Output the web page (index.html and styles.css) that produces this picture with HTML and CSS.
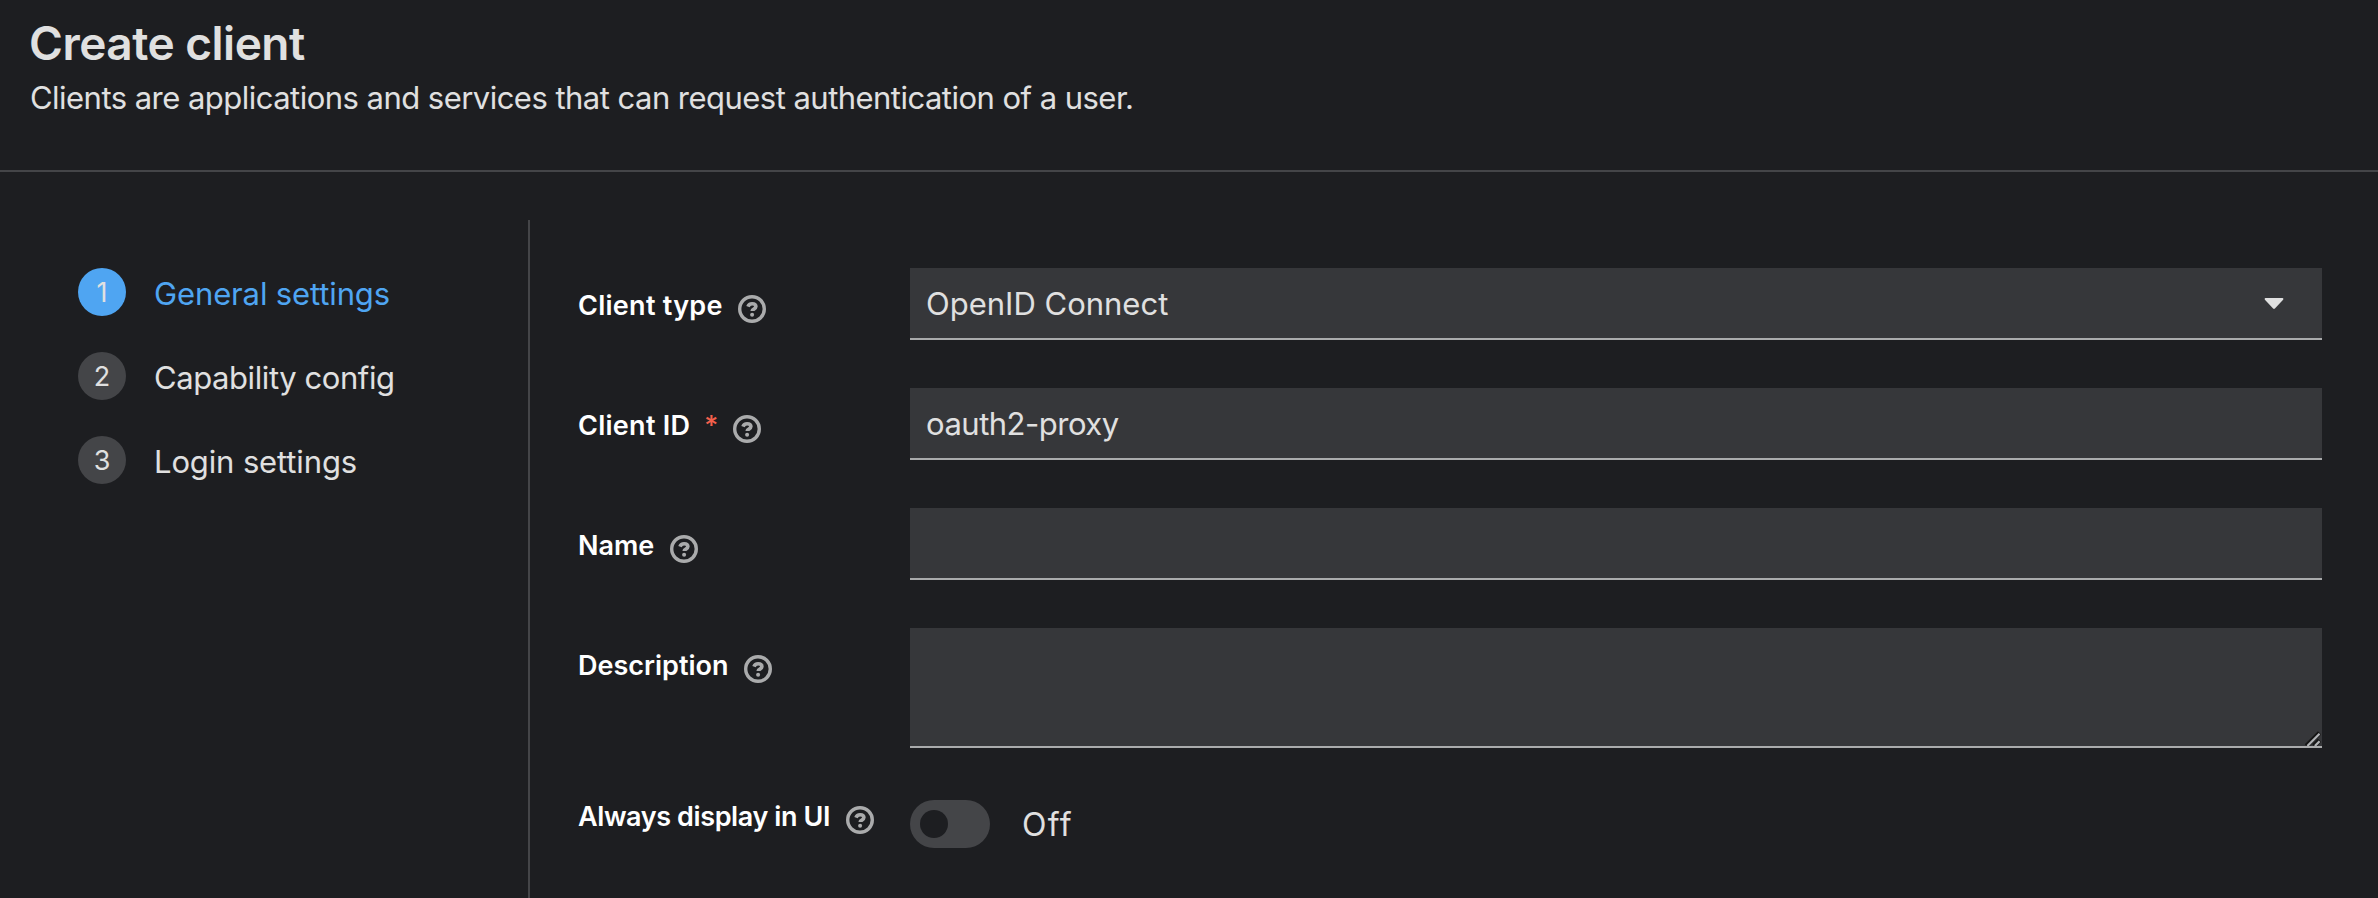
FILE: index.html
```html
<!DOCTYPE html>
<html lang="en">
<head>
<meta charset="utf-8">
<title>Create client</title>
<link rel="stylesheet" href="styles.css">
</head>
<body>
<svg class="sprite" aria-hidden="true">
  <symbol id="help" viewBox="0 0 28 28">
    <circle cx="14" cy="14" r="12.3" fill="none" stroke="currentColor" stroke-width="3.4"/>
    <path d="M10 11.6C10.6 9.7 12.1 8.7 14.1 8.7c2.2 0 3.8 1.1 3.8 2.9 0 2.5-3.7 2.4-3.7 4.4" fill="none" stroke="currentColor" stroke-width="3.6"/>
    <circle cx="14.1" cy="19.7" r="2" fill="currentColor"/>
  </symbol>
</svg>

<header class="page-header">
  <h1 class="title">Create client</h1>
  <p class="subtitle">Clients are applications and services that can request authentication of a user.</p>
</header>

<div class="wizard">
  <nav class="steps">
    <a class="step step-current"><span class="step-number">1</span><span class="step-name">General settings</span></a>
    <a class="step"><span class="step-number">2</span><span class="step-name step-tight">Capability config</span></a>
    <a class="step"><span class="step-number">3</span><span class="step-name">Login settings</span></a>
  </nav>

  <form class="form">
    <div class="row">
      <div class="label"><span class="label-text label-wide">Client type</span><svg class="help"><use href="#help"/></svg></div>
      <div class="control select"><span>OpenID Connect</span><svg class="caret" viewBox="0 0 20 12"><path d="M1.3 0h17.4q1.3 0.7 0.4 1.8L10.9 10.5q-0.9 0.9-1.8 0L0.9 1.8Q0 0.7 1.3 0z" fill="currentColor"/></svg></div>
    </div>
    <div class="row">
      <div class="label"><span class="label-text label-wide">Client ID</span><span class="required">*</span><svg class="help"><use href="#help"/></svg></div>
      <input class="control value-tight" type="text" value="oauth2-proxy">
    </div>
    <div class="row">
      <div class="label"><span class="label-text">Name</span><svg class="help help-spaced"><use href="#help"/></svg></div>
      <input class="control" type="text">
    </div>
    <div class="row">
      <div class="label"><span class="label-text">Description</span><svg class="help help-spaced"><use href="#help"/></svg></div>
      <div class="control textarea"><svg class="grip" viewBox="0 0 16 16"><path d="M1 16L15 2M9 16l6-6" stroke="#151515" stroke-width="5"/><path d="M2 16L15 3M10 16l5-5" stroke="#b0b2b5" stroke-width="2.4"/></svg></div>
    </div>
    <div class="row row-switch">
      <div class="label"><span class="label-text label-tight">Always display in UI</span><svg class="help help-spaced"><use href="#help"/></svg></div>
      <div class="switch"><span class="track"><span class="knob"></span></span><span class="switch-text">Off</span></div>
    </div>
  </form>
</div>
</body>
</html>
```
FILE: styles.css
```css
* { box-sizing: border-box; }

body {
  margin: 0;
  height: 898px;
  overflow: hidden;
  display: flex;
  flex-direction: column;
  background: #1d1e21;
  color: #e0e0e0;
  font-family: Inter, "Open Sans", sans-serif;
  font-size: 31px;
  line-height: 48px;
  white-space: nowrap;
}

.sprite { display: none; }

.page-header {
  height: 172px;
  flex: none;
  padding: 13px 29px 0;
  border-bottom: 2px solid #444548;
}

.title {
  margin: 0;
  font-size: 46px;
  font-weight: 600;
  letter-spacing: -0.5px;
  line-height: 60px;
}

.subtitle {
  margin: 1px 0 0 1px;
  letter-spacing: -0.53px;
}

.wizard {
  flex: 1;
  display: flex;
  padding-top: 48px;
}

.steps {
  width: 530px;
  flex: none;
  display: flex;
  flex-direction: column;
  gap: 36px;
  padding: 48px 0 0 78px;
  border-right: 2px solid #444548;
}

.step {
  display: flex;
  gap: 28px;
  height: 48px;
}

.step-number {
  width: 48px;
  height: 48px;
  padding-top: 1px;
  border-radius: 50%;
  background: #444548;
  font-size: 27px;
  text-align: center;
}

.step-name {
  padding-top: 2px;
  letter-spacing: -0.13px;
}

.step-tight { letter-spacing: -0.42px; }

.step-current { color: #4fa5f2; }

.step-current .step-number {
  background: #4fa5f2;
  color: #e0e0e0;
}

.form {
  flex: 1;
  display: flex;
  flex-direction: column;
  gap: 48px;
  padding: 48px 56px 0 48px;
}

.row {
  display: grid;
  grid-template-columns: 332px 1fr;
}

.label {
  display: flex;
  align-items: flex-start;
  padding-top: 14px;
  color: #fff;
  font-size: 27px;
  font-weight: 600;
}

.label-wide { letter-spacing: 0.28px; }
.label-tight { letter-spacing: -0.4px; }

.required {
  margin-left: 14px;
  color: #f4604c;
  font-size: 27px;
  font-weight: 500;
}

.help {
  width: 28px;
  height: 28px;
  margin: 13px 0 0 15px;
  color: #aaabac;
}

.help-spaced { margin-left: 16px; }

.control {
  width: 100%;
  height: 72px;
  padding: 0 16px;
  border: 0;
  border-bottom: 2px solid #aaabac;
  border-radius: 0;
  outline: 0;
  background: #36373a;
  color: #e0e0e0;
  font: inherit;
}

.value-tight { letter-spacing: -0.5px; }

.select {
  display: flex;
  align-items: center;
  justify-content: space-between;
  padding-top: 2px;
}

.caret {
  width: 20px;
  height: 12px;
  margin-right: 22px;
}

.textarea {
  height: 120px;
  display: flex;
  align-items: flex-end;
  justify-content: flex-end;
  padding: 0 1px 0 0;
}

.grip {
  width: 16px;
  height: 15px;
}

.row-switch { margin-top: 4px; }

.row-switch .label { padding-top: 0; margin-top: -7px; }

.switch {
  display: flex;
  gap: 32px;
  height: 48px;
}

.track {
  width: 80px;
  padding: 10px;
  border-radius: 24px;
  background: #444548;
}

.knob {
  display: block;
  width: 28px;
  height: 28px;
  border-radius: 50%;
  background: #1d1e21;
}

.switch-text {
  font-size: 32px;
  letter-spacing: 1.4px;
  line-height: 49px;
}
```
